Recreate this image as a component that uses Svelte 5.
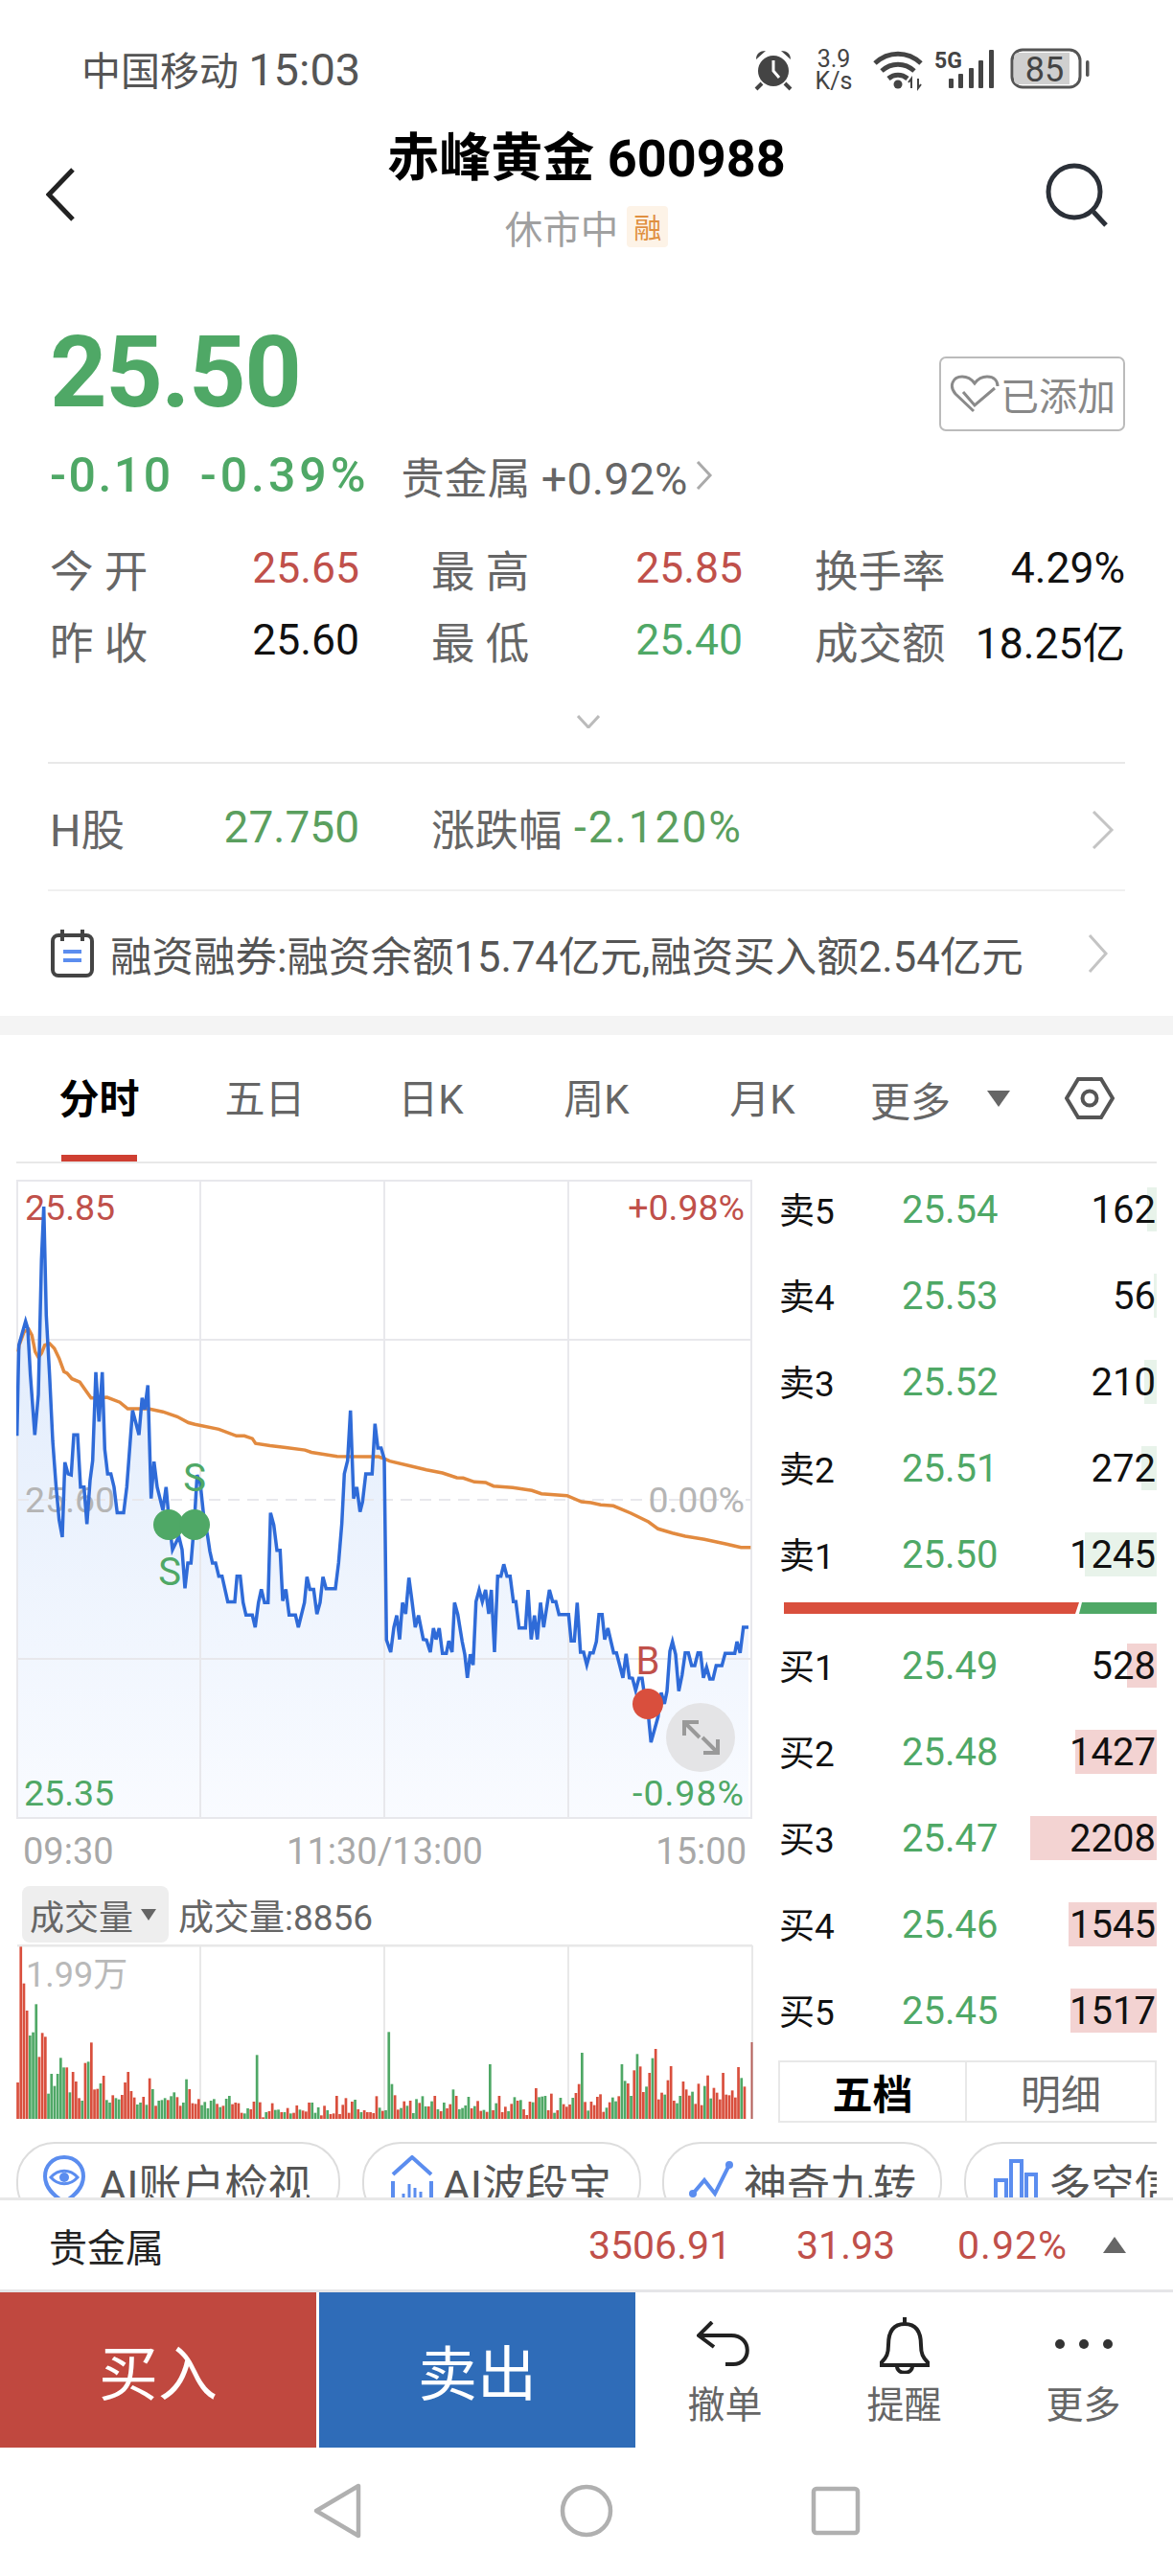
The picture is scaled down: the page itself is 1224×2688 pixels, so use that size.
<script lang="ts">
  /* Traced from the crops: [x, y] in crop pixels, converted to page pixels below. */
  const leftCrop = [[8,785],[12,600],[14,510],[35,438],[42,460],[50,600],[64,782],[75,660],[85,250],[92,90],[100,420],[110,600],[120,800],[130,930],[140,1040],[150,1092],[158,865],[168,900],[178,903],[186,782],[198,782],[207,940],[218,940],[227,1052],[237,920],[245,860],[255,592],[265,742],[275,592],[283,825],[292,900],[302,900],[312,940],[322,1018],[342,1018],[352,940],[370,708],[380,745],[390,782],[400,670],[408,705],[418,632],[428,975],[437,863],[447,940],[465,1010],[475,940],[485,1050],[495,1130],[515,1090],[525,1130],[534,1247],[543,1170],[553,1170],[563,1050],[572,903],[582,930],[592,1020],[605,1090],[612,1135],[620,1170],[630,1170],[640,1210],[650,1210],[668,1288],[690,1288],[697,1210],[707,1210],[716,1290],[725,1328],[745,1328],[754,1365],[764,1290],[773,1250],[783,1290],[794,1290],[802,1018],[812,1055],[822,1132],[832,1132],[840,1285],[850,1250],[860,1328],[880,1328],[889,1365],[908,1290],[916,1212],[925,1250],[937,1250],[947,1325],[957,1290],[966,1212],[976,1248],[1005,1248],[1015,1170],[1025,1050],[1033,900],[1043,860],[1052,708],[1062,975],[1072,940],[1082,1015],[1090,985],[1100,900],[1120,900],[1129,748],[1138,822],[1148,822],[1158,855]];
  const rightCrop = [[25,940],[38,978],[48,900],[57,863],[66,938],[75,823],[85,858],[95,745],[105,820],[115,900],[125,863],[140,938],[150,940],[162,978],[172,903],[180,938],[190,903],[200,982],[212,982],[220,943],[230,978],[238,823],[248,860],[262,945],[270,985],[278,1058],[287,985],[296,1018],[305,820],[315,783],[325,820],[335,783],[345,858],[353,783],[363,978],[373,740],[383,740],[392,703],[402,740],[412,740],[422,820],[430,820],[440,902],[460,902],[468,783],[478,938],[488,863],[497,938],[507,823],[517,900],[535,783],[545,820],[555,820],[565,860],[595,860],[603,943],[613,943],[622,823],[632,978],[642,978],[652,1018],[662,980],[672,980],[682,945],[690,860],[700,860],[708,938],[718,903],[736,980],[745,980],[765,1058],[775,983],[785,1058],[795,1060],[805,1098],[815,1060],[825,1060],[835,1130],[845,1180],[853,1260],[875,1180],[885,1105],[895,1140],[903,1100],[912,975],[920,945],[930,985],[940,1100],[950,1050],[960,980],[970,980],[980,1020],[990,1020],[1000,980],[1008,980],[1017,1058],[1027,1025],[1037,1062],[1047,1062],[1057,1020],[1075,1020],[1085,982],[1115,982],[1122,945],[1132,980],[1142,900],[1158,900]];
  const avgLeft = [[12,530],[15,510],[30,470],[45,462],[55,480],[65,530],[75,547],[85,535],[95,510],[110,505],[125,520],[140,550],[155,590],[165,595],[180,612],[205,622],[225,650],[240,670],[265,670],[290,668],[330,683],[355,703],[420,703],[465,712],[510,727],[545,745],[565,750],[640,765],[695,785],[720,785],[745,793],[755,808],[800,815],[850,820],[910,828],[930,835],[1010,847],[1100,848],[1140,848],[1160,855]];
  const avgRight = [[35,380],[100,395],[150,407],[200,417],[245,432],[265,433],[300,445],[335,447],[360,458],[420,463],[480,472],[510,482],[590,488],[635,507],[665,510],[695,517],[735,520],[790,543],[845,570],[875,592],[920,605],[960,615],[1020,625],[1090,640],[1135,650],[1165,650]];

  const fromLeft = ([x, y]) => [15 + x / 3, 1230 + y / 2.904];
  const fromRight = ([x, y]) => [395 + x / 3, 1400 + y / 3];
  const fmtPts = (pts) => pts.map(p => `${p[0].toFixed(1)},${p[1].toFixed(1)}`).join(' ');

  const pricePts = [...leftCrop.map(fromLeft), ...rightCrop.map(fromRight)];
  const priceLine = fmtPts(pricePts);
  const priceArea = fmtPts([[pricePts[0][0], 1899], ...pricePts, [pricePts[pricePts.length - 1][0], 1899]]);
  const avgLine = fmtPts([...avgLeft.map(fromLeft), ...avgRight.map(fromRight)]);

  /* Volume bars: colour + bar top in crop pixels, one per minute. */
  const volRaw = 'r465 r40 r155 r240 g318 g308 g220 r385 r310 r322 g500 g438 g476 g438 g388 g418 r418 g496 r432 r462 r514 g522 r404 g400 r340 r487 r485 g468 r444 g520 g528 r505 g514 g518 r504 r465 r432 r492 r512 g534 g528 r510 g535 r452 g486 r538 g522 g520 g514 r520 g508 g496 r511 r538 g528 g455 r486 r530 r532 r517 g536 g526 g546 g522 g517 r532 g542 r538 g516 g507 r533 r528 r530 r560 g562 g546 r549 r525 g379 r527 r574 g558 r555 r530 g551 g550 r558 g558 r545 g562 r560 r537 g550 r553 r556 r528 g528 g560 g543 r568 r538 g552 r564 r562 r507 r564 r535 r514 r560 r525 g519 r549 g558 r552 r558 r558 r561 r508 g544 r554 g552 g307 g470 r505 r550 g545 r524 g538 r522 g561 g517 r529 g508 g540 r540 g524 r507 g549 r555 g528 r546 r533 g487 r507 g549 g545 g537 g510 r546 g539 r523 r554 g551 r557 g408 r552 g530 r507 r558 r541 g555 r532 g511 r522 g520 r549 r567 r525 g527 r483 g511 g509 g507 r552 r500 g560 r552 g513 r533 r541 r534 g513 r498 r470 g372 r526 g553 r525 r536 r510 r502 r557 g544 r527 g512 g524 r508 g408 g460 r468 g507 r427 g376 r415 r495 g478 r435 g389 r360 r518 r497 g503 r458 r414 r522 g530 g507 r462 r487 r506 g494 r532 r469 r536 g476 r443 g515 r482 r497 r518 r435 r503 r505 r490 r512 r417 g451 r478';
  const volBars = volRaw.split(' ').map((v, i) => ({
    x: 17.2 + i * 3.2,
    y: 2020 + Number(v.slice(1)) / 3,
    color: v[0] === 'r' ? '#d94f3d' : '#4fa866'
  }));

  const asks = [
    { name: '卖5', price: '25.54', qty: 162, bar: 10 },
    { name: '卖4', price: '25.53', qty: 56, bar: 3 },
    { name: '卖3', price: '25.52', qty: 210, bar: 13 },
    { name: '卖2', price: '25.51', qty: 272, bar: 16 },
    { name: '卖1', price: '25.50', qty: 1245, bar: 75 }
  ];
  const bids = [
    { name: '买1', price: '25.49', qty: 528, bar: 31 },
    { name: '买2', price: '25.48', qty: 1427, bar: 85 },
    { name: '买3', price: '25.47', qty: 2208, bar: 132 },
    { name: '买4', price: '25.46', qty: 1545, bar: 92 },
    { name: '买5', price: '25.45', qty: 1517, bar: 90 }
  ];
  const tabs = ['分时', '五日', '日K', '周K', '月K'];
</script>

<div class="phone">
  <div class="status">
    <span class="carrier">中国移动 <span class="clock">15:03</span></span>
    <svg class="status-icons" width="350" height="55" viewBox="787 45 350 55">
      <!-- alarm -->
      <circle cx="807" cy="74" r="16" fill="#444" />
      <path d="M807 63v11l6 7" fill="none" stroke="#fff" stroke-width="3" />
      <path d="M789 62c0-6 4-9 10-9zM825 62c0-6-4-9-10-9z" fill="#444" />
      <path d="M795 87l-6 6M819 87l6 6" stroke="#444" stroke-width="4" />
      <!-- speed -->
      <text class="st-small" x="870" y="70" text-anchor="middle">3.9</text>
      <text class="st-small" x="870" y="93" text-anchor="middle">K/s</text>
      <!-- wifi -->
      <g fill="none" stroke="#444" stroke-width="5">
        <path d="M913 66c14-13 34-13 48 0" />
        <path d="M920 74c10-9 24-9 34 0" />
        <path d="M927 82c6-5 14-5 20 0" />
      </g>
      <circle cx="937" cy="88" r="4.5" fill="#444" />
      <path d="M951 92v-10l-3 4M958 82v10l3-4" fill="none" stroke="#444" stroke-width="2" />
      <!-- signal -->
      <text class="st-small st-5g" x="975" y="71">5G</text>
      <g fill="#444">
        <rect x="990" y="82" width="5" height="10" rx="1" />
        <rect x="1000" y="77" width="5" height="15" rx="1" />
        <rect x="1011" y="71" width="5" height="21" rx="1" />
        <rect x="1021" y="63" width="5" height="29" rx="1" />
        <rect x="1032" y="52" width="5" height="40" rx="1" />
      </g>
      <!-- battery -->
      <rect x="1056" y="52" width="71" height="39" rx="11" fill="#fff" stroke="#555" stroke-width="3" />
      <path d="M1062 55h54v33h-54a5 5 0 0 1-4-4v-25a5 5 0 0 1 4-4z" fill="#cfcfcf" />
      <rect x="1133" y="63" width="3.5" height="17" rx="1.7" fill="#555" />
      <text class="st-batt" x="1090" y="85" text-anchor="middle">85</text>
    </svg>
  </div>

  <header class="head">
    <svg class="back" width="30" height="56" viewBox="48 174 30 56">
      <polyline points="76,176 51,202 76,228" fill="none" stroke="#222" stroke-width="5" />
    </svg>
    <div class="head-mid">
      <div class="title">赤峰黄金 600988</div>
      <div class="sub">
        <span>休市中</span>
        <span class="rong">融</span>
      </div>
    </div>
    <svg class="search" width="66" height="68" viewBox="1090 167 66 68">
      <circle cx="1121" cy="198" r="27" fill="none" stroke="#2b3038" stroke-width="5" />
      <path d="M1141 219l13 14" stroke="#2b3038" stroke-width="5" fill="none" />
    </svg>
  </header>

  <section class="quote">
    <div class="price-row">
      <div class="price">25.50</div>
      <div class="added">
        <svg width="52" height="40" viewBox="0 0 52 40">
          <path d="M25 38L6 20C-1 12 3 2 13 2c6 0 10 3 13 7 3-4 7-7 13-7 7 0 11 4 11 10" fill="none" stroke="#8a8a8a" stroke-width="3" />
          <path d="M14 18l12 14 21-18" fill="none" stroke="#8a8a8a" stroke-width="3" />
        </svg>
        <span>已添加</span>
      </div>
    </div>

    <div class="change-row">
      <span class="chg">-0.10</span>
      <span class="chg pct">-0.39%</span>
      <span class="sector">贵金属 <span class="sector-pct">+0.92%</span></span>
      <svg class="sector-arrow" width="18" height="30" viewBox="0 0 18 30">
        <polyline points="2,1 15,15 2,29" fill="none" stroke="#aaa" stroke-width="3" />
      </svg>
    </div>

    <div class="stats">
      <div class="cell"><span class="lbl">今 开</span><span class="red">25.65</span></div>
      <div class="cell"><span class="lbl">最 高</span><span class="red">25.85</span></div>
      <div class="cell"><span class="lbl">换手率</span><span class="blk">4.29%</span></div>
      <div class="cell"><span class="lbl">昨 收</span><span class="blk">25.60</span></div>
      <div class="cell"><span class="lbl">最 低</span><span class="grn">25.40</span></div>
      <div class="cell"><span class="lbl">成交额</span><span class="blk">18.25亿</span></div>
    </div>

    <div class="expand">
      <svg width="24" height="14" viewBox="0 0 24 14">
        <polyline points="1,1 12,13 23,1" fill="none" stroke="#bbb" stroke-width="3" />
      </svg>
    </div>
  </section>

  <div class="hk-row">
    <div class="cell"><span class="lbl">H股</span><span class="grn">27.750</span></div>
    <div class="cell hk-chg"><span class="lbl">涨跌幅</span><span class="grn">-2.120%</span></div>
    <div class="hk-arrow">
      <svg width="24" height="40" viewBox="0 0 24 40">
        <polyline points="2,1 21,20 2,39" fill="none" stroke="#c4c4c4" stroke-width="3" />
      </svg>
    </div>
  </div>

  <div class="margin-row">
    <svg width="46" height="52" viewBox="53 971 46 52">
      <rect x="55" y="978" width="41" height="42" rx="6" fill="none" stroke="#444" stroke-width="4" />
      <path d="M65 972v12M86 972v12" stroke="#444" stroke-width="4" />
      <path d="M66 995h19" stroke="#5b8def" stroke-width="4" />
      <path d="M66 1004h19" stroke="#5b8def" stroke-width="4" />
    </svg>
    <span class="margin-text">融资融券:融资余额15.74亿元,融资买入额2.54亿元</span>
    <svg class="margin-arrow" width="22" height="40" viewBox="0 0 22 40">
      <polyline points="2,1 19,20 2,39" fill="none" stroke="#c4c4c4" stroke-width="3" />
    </svg>
  </div>

  <div class="band"></div>

  <nav class="tabs">
    {#each tabs as tab, i}
      <div class="tab" class:active={i === 0}>{tab}</div>
    {/each}
    <span class="more">更多</span>
    <span class="more-caret"></span>
    <svg class="hex" width="52" height="46" viewBox="1111 1125 52 46">
      <polygon points="1113,1148 1125,1128 1149,1128 1161,1148 1149,1168 1125,1168" fill="none" stroke="#555" stroke-width="4" />
      <circle cx="1137" cy="1148" r="7.5" fill="none" stroke="#555" stroke-width="4" />
    </svg>
  </nav>

  <section class="market">
    <div class="chart-col">
      <svg class="price-chart" width="770" height="668" viewBox="17 1233 770 668">
        <defs>
          <linearGradient id="areaFill" gradientUnits="userSpaceOnUse" x1="0" y1="1400" x2="0" y2="1899">
            <stop offset="0" stop-color="#e3edfc" />
            <stop offset="1" stop-color="#f9fbff" />
          </linearGradient>
        </defs>
        <polygon points={priceArea} fill="url(#areaFill)" />
        <g stroke="#e8e8ec" stroke-width="2" fill="none">
          <rect x="18" y="1234" width="766" height="665" />
          <path d="M209 1234V1899M401 1234V1899M593 1234V1899" />
          <path d="M18 1400H784M18 1733H784" />
          <path d="M18 1567H784" stroke-dasharray="12 8" />
        </g>
        <text class="ch red-t" x="26" y="1275">25.85</text>
        <text class="ch red-t" x="777" y="1275" text-anchor="end">+0.98%</text>
        <text class="ch gray-t" x="26" y="1580">25.60</text>
        <text class="ch gray-t" x="777" y="1580" text-anchor="end">0.00%</text>
        <text class="ch grn-t" x="25" y="1886">25.35</text>
        <text class="ch grn-t low-pct" x="777" y="1886" text-anchor="end">-0.98%</text>

        <polyline points={avgLine} fill="none" stroke="#e28a3f" stroke-width="3.5" />
        <polyline points={priceLine} fill="none" stroke="#2f6bd8" stroke-width="3.5" />

        <circle cx="176" cy="1593" r="16" fill="#4fa866" />
        <circle cx="203" cy="1593" r="16" fill="#4fa866" />
        <text class="mark grn-t" x="203" y="1558" text-anchor="middle">S</text>
        <text class="mark grn-t" x="177" y="1656" text-anchor="middle">S</text>
        <circle cx="676" cy="1780" r="16" fill="#d94f3d" />
        <text class="mark red-t" x="676" y="1749" text-anchor="middle">B</text>

        <circle cx="731" cy="1815" r="36" fill="#e4e4e6" />
        <g fill="none" stroke="#999" stroke-width="4">
          <path d="M714 1813v-14h15M715 1800l15 15" />
          <path d="M749 1817v14h-15M748 1830l-15-15" />
        </g>
      </svg>

      <div class="times">
        <span>09:30</span>
        <span>11:30/13:00</span>
        <span>15:00</span>
      </div>

      <div class="vol-head">
        <div class="vol-select">成交量<span class="vol-caret"></span></div>
        <span class="vol-val">成交量:8856</span>
      </div>

      <svg class="vol-chart" width="770" height="184" viewBox="17 2031 770 184">
        <g stroke="#e8e8e8" stroke-width="2" fill="none">
          <path d="M18 2032H785" stroke-width="3" />
          <path d="M209 2032V2213M401 2032V2213M593 2032V2213M785 2032V2213" />
        </g>
        {#each volBars as bar}
          <rect x={bar.x} y={bar.y} width="2.7" height={2213 - bar.y} fill={bar.color} />
        {/each}
        <rect x="783.5" y="2133" width="2" height="80" fill="#b5605a" />
        <text class="ch vol-max" x="27" y="2075">1.99万</text>
      </svg>
    </div>

    <div class="book">
      {#each asks as row}
        <div class="book-row">
          <span class="qty-bar ask" style="width: {row.bar}px"></span>
          <span class="b-name">{row.name}</span>
          <span class="b-price">{row.price}</span>
          <span class="b-qty">{row.qty}</span>
        </div>
      {/each}
      <svg class="ratio" width="389" height="12" viewBox="0 0 389 12">
        <polygon points="0,0 308,0 304,12 0,12" fill="#d94f3d" />
        <polygon points="311,0 389,0 389,12 308,12" fill="#4fa866" />
      </svg>
      {#each bids as row}
        <div class="book-row">
          <span class="qty-bar bid" style="width: {row.bar}px"></span>
          <span class="b-name">{row.name}</span>
          <span class="b-price">{row.price}</span>
          <span class="b-qty">{row.qty}</span>
        </div>
      {/each}
      <div class="switch">
        <div class="sw on">五档</div>
        <div class="sw">明细</div>
      </div>
    </div>
  </section>

  <div class="pills">
    <div class="pill p1">
      <svg width="44" height="56" viewBox="0 0 44 56">
        <path d="M22 2C10 2 2 11 2 22c0 12 9 20 20 27 11-7 20-15 20-27C42 11 34 2 22 2z" fill="none" stroke="#5b8def" stroke-width="4" />
        <path d="M8 23c8-9 20-9 28 0-8 9-20 9-28 0z" fill="none" stroke="#5b8def" stroke-width="3" />
        <circle cx="22" cy="23" r="5" fill="#5b8def" />
      </svg>
      <span>AI账户检视</span>
    </div>
    <div class="pill p2">
      <svg width="48" height="56" viewBox="0 0 48 56">
        <path d="M4 20L24 2l20 18" fill="none" stroke="#5b8def" stroke-width="4" />
        <path d="M4 27v20c0 3 3 5 6 5M44 27v20c0 3-3 5-6 5" fill="none" stroke="#5b8def" stroke-width="4" />
        <path d="M15 40v8M21 30v18M27 34v14M33 38v10" stroke="#5b8def" stroke-width="3" />
      </svg>
      <span>AI波段宝</span>
    </div>
    <div class="pill p3">
      <svg width="46" height="48" viewBox="0 0 46 48">
        <polyline points="4,36 16,22 27,36 42,6" fill="none" stroke="#5b8def" stroke-width="4" />
        <circle cx="4" cy="36" r="4" fill="#5b8def" />
        <circle cx="42" cy="6" r="4" fill="#5b8def" />
      </svg>
      <span>神奇九转</span>
    </div>
    <div class="pill p4">
      <svg width="46" height="56" viewBox="0 0 46 56">
        <g fill="none" stroke="#5b8def" stroke-width="4">
          <rect x="2" y="26" width="11" height="28" />
          <rect x="18" y="6" width="11" height="48" />
          <rect x="34" y="20" width="10" height="34" />
        </g>
      </svg>
      <span>多空信号</span>
    </div>
  </div>

  <div class="sector-row">
    <span class="sector-name">贵金属</span>
    <span class="sector-v v1">3506.91</span>
    <span class="sector-v v2">31.93</span>
    <span class="sector-v v3">0.92%</span>
    <span class="sector-up"></span>
  </div>

  <div class="actions">
    <button class="trade buy">买入</button>
    <button class="trade sell">卖出</button>
    <div class="tool">
      <div class="tool-icon">
        <svg width="60" height="48" viewBox="727 2424 60 48">
          <path d="M743 2425l-14 14 16 12" fill="none" stroke="#222" stroke-width="4" />
          <path d="M730 2439h33c22 0 22 30 2 30h-8" fill="none" stroke="#222" stroke-width="4" />
        </svg>
      </div>
      <span>撤单</span>
    </div>
    <div class="tool">
      <div class="tool-icon">
        <svg width="60" height="62" viewBox="914 2417 60 62">
          <path d="M944 2427c-13 0-17 10-17 22 0 9-2 13-7 18v3h48v-3c-5-5-7-9-7-18 0-12-4-22-17-22z" fill="none" stroke="#222" stroke-width="4" />
          <path d="M944 2420v7M936 2471c0 9 16 9 16 0" fill="none" stroke="#222" stroke-width="4" />
        </svg>
      </div>
      <span>提醒</span>
    </div>
    <div class="tool">
      <div class="tool-icon">
        <svg width="64" height="48" viewBox="1098 2423 64 48">
          <circle cx="1105" cy="2447" r="5" fill="#333" />
          <circle cx="1130" cy="2447" r="5" fill="#333" />
          <circle cx="1155" cy="2447" r="5" fill="#333" />
        </svg>
      </div>
      <span>更多</span>
    </div>
  </div>

  <div class="navbar">
    <svg width="60" height="60" viewBox="0 0 60 60">
      <polygon points="8,30 52,4 52,56" fill="none" stroke="#b0b0b0" stroke-width="4.5" stroke-linejoin="round" />
    </svg>
    <svg width="60" height="60" viewBox="0 0 60 60">
      <circle cx="30" cy="30" r="25" fill="none" stroke="#b0b0b0" stroke-width="4.5" />
    </svg>
    <svg width="60" height="60" viewBox="0 0 60 60">
      <rect x="7" y="7" width="46" height="46" rx="3" fill="none" stroke="#b0b0b0" stroke-width="4.5" />
    </svg>
  </div>
</div>

<style>
  :global(body) {
    margin: 0;
    background: #fff;
  }

  .phone {
    width: 1224px;
    height: 2688px;
    overflow: hidden;
    background: #fff;
    font-family: Roboto, "Noto Sans CJK SC", sans-serif;
    display: flex;
    flex-direction: column;
  }

  /* ── status bar ── */
  .status {
    height: 130px;
    box-sizing: border-box;
    padding: 46px 87px 0 85px;
    display: flex;
    justify-content: space-between;
    align-items: flex-start;
    flex-shrink: 0;
  }
  .carrier { font-size: 41px; line-height: 54px; color: #555; }
  .clock { font-size: 47px; }
  .status-icons { margin-top: -1px; }
  .st-small { font-size: 25px; fill: #444; }
  .st-5g { font-size: 23px; font-weight: 700; }
  .st-batt { font-size: 36px; fill: #444; }

  /* ── header ── */
  .head {
    height: 145px;
    display: grid;
    grid-template-columns: 1fr auto 1fr;
    align-items: center;
    flex-shrink: 0;
  }
  .back { margin-left: 48px; }
  .search { justify-self: end; margin-right: 68px; }
  .head-mid { align-self: start; display: flex; flex-direction: column; align-items: center; }
  .title { margin-top: 2px; font-size: 54px; line-height: 68px; font-weight: 700; color: #000; white-space: nowrap; }
  .sub { margin-top: 6px; height: 60px; display: flex; align-items: center; gap: 9px; font-size: 39.5px; color: #a0a0a0; }
  .rong {
    width: 43px;
    height: 43px;
    border-radius: 4px;
    background: #fdf3e7;
    color: #e09040;
    font-size: 29px;
    display: flex;
    align-items: center;
    justify-content: center;
  }

  /* ── quote ── */
  .quote { padding: 0 50px 0 52px; flex-shrink: 0; }
  .price-row { height: 175px; display: flex; justify-content: space-between; }
  .price {
    font-size: 104px;
    line-height: 106px;
    font-weight: 700;
    color: #4fa866;
    margin-top: 61px;
    letter-spacing: -1.5px;
  }
  .added {
    align-self: flex-end;
    width: 194px;
    height: 78px;
    box-sizing: border-box;
    border: 2px solid #bbb;
    border-radius: 7px;
    display: flex;
    align-items: center;
    padding-left: 9px;
    gap: 1px;
    font-size: 40px;
    color: #888;
  }
  .change-row { height: 92px; margin-bottom: 2px; display: flex; align-items: center; }
  .chg { font-size: 50px; font-weight: 500; color: #4fa866; letter-spacing: 2.5px; }
  .pct { margin-left: 28px; letter-spacing: 4px; }
  .sector { margin-left: 33px; font-size: 45px; color: #666; }
  .sector-pct { font-size: 47px; }
  .sector-arrow { margin-left: 8px; }

  .stats {
    margin-top: 13px;
    display: grid;
    grid-template-columns: 323px 325px 324px;
    column-gap: 75px;
    grid-auto-rows: 75px;
    align-items: center;
    font-size: 44.5px;
  }
  .cell { display: flex; justify-content: space-between; align-items: center; }
  .lbl { color: #666; font-size: 45.5px; }
  .red { color: #c0504a; }
  .grn { color: #4fa866; }
  .blk { color: #111; }
  .expand { height: 90px; box-sizing: border-box; padding-top: 6px; display: flex; align-items: center; justify-content: center; margin-right: -2px; }

  /* ── H share / margin rows ── */
  .hk-row {
    margin: 0 50px;
    padding-left: 2px;
    height: 135px;
    box-sizing: border-box;
    border-top: 2px solid #e8e8e8;
    border-bottom: 2px solid #f0f0f0;
    display: grid;
    grid-template-columns: 323px 325px 1fr;
    column-gap: 75px;
    align-items: center;
    font-size: 46px;
    flex-shrink: 0;
  }
  .hk-chg .grn { letter-spacing: 2px; }
  .hk-row .grn { color: #5a9f5e; }
  .hk-arrow { justify-self: end; margin-right: 11px; height: 40px; }
  .margin-row {
    height: 130px;
    padding: 0 67px 0 53px;
    display: flex;
    align-items: center;
    gap: 16px;
    flex-shrink: 0;
  }
  .margin-text { font-size: 43.5px; color: #555; white-space: nowrap; }
  .margin-arrow { margin-left: auto; }
  .band { height: 20px; background: #f4f4f4; flex-shrink: 0; }

  /* ── tabs ── */
  .tabs {
    height: 134px;
    box-sizing: border-box;
    margin: 0 17px;
    border-bottom: 2px solid #e8e8e8;
    display: flex;
    align-items: center;
    font-size: 42px;
    color: #666;
    flex-shrink: 0;
  }
  .tab {
    width: 173px;
    height: 100%;
    line-height: 136px;
    text-align: center;
    position: relative;
  }
  .tab.active { color: #000; font-weight: 700; }
  .tab.active::after {
    content: '';
    position: absolute;
    left: 47px;
    bottom: 0;
    width: 79px;
    height: 7px;
    background: #cf3f32;
  }
  .more { margin-left: 26px; }
  .more-caret {
    margin-left: 38px;
    width: 0;
    height: 0;
    border-left: 12.5px solid transparent;
    border-right: 12.5px solid transparent;
    border-top: 17px solid #666;
  }
  .hex { margin-left: auto; margin-right: 44px; }

  /* ── chart + order book ── */
  .market {
    height: 1001px;
    padding-left: 17px;
    display: grid;
    grid-template-columns: 770px 395px;
    column-gap: 25px;
    flex-shrink: 0;
  }
  .chart-col { padding-top: 17px; display: flex; flex-direction: column; }
  .price-chart, .vol-chart { display: block; flex-shrink: 0; }
  .ch { font-size: 37.5px; }
  .low-pct { letter-spacing: 1px; }
  .mark { font-size: 40px; }
  .red-t { fill: #c0504a; }
  .grn-t { fill: #4fa866; }
  .gray-t { fill: #b5b5b5; }
  .vol-max { fill: #b9b9b9; font-size: 36px; }

  .times {
    height: 66px;
    padding: 0 8px 0 7px;
    display: flex;
    justify-content: space-between;
    align-items: center;
    font-size: 38px;
    color: #a8a8a8;
    box-sizing: border-box;
    flex-shrink: 0;
  }
  .vol-head {
    margin: 3px 0 2px 6px;
    height: 59px;
    display: flex;
    align-items: center;
    gap: 10px;
    font-size: 36px;
    color: #666;
    flex-shrink: 0;
  }
  .vol-val { font-size: 37px; }
  .vol-select {
    width: 153px;
    height: 59px;
    box-sizing: border-box;
    padding-left: 8px;
    background: #eee;
    border-radius: 8px;
    display: flex;
    align-items: center;
    gap: 8px;
  }
  .vol-caret {
    width: 0;
    height: 0;
    border-left: 8px solid transparent;
    border-right: 8px solid transparent;
    border-top: 12px solid #666;
  }

  .book { padding-top: 3px; display: flex; flex-direction: column; }
  .book-row {
    height: 90px;
    flex-shrink: 0;
    position: relative;
    display: flex;
    align-items: center;
    font-size: 40px;
    color: #111;
  }
  .b-name { width: 129px; padding-left: 1px; font-size: 37px; box-sizing: border-box; position: relative; top: -1px; }
  .b-price { color: #4fa866; position: relative; }
  .b-qty { margin-left: auto; margin-right: 1px; position: relative; }
  .qty-bar { position: absolute; right: 0; top: 22px; height: 46px; }
  .qty-bar.ask { background: #e8f3ea; }
  .qty-bar.bid { background: #f3d3d2; }
  .ratio { margin: 5px 0 9px 6px; flex-shrink: 0; display: block; }
  .switch {
    margin-top: 7px;
    height: 65px;
    box-sizing: border-box;
    border: 2px solid #e8e8e8;
    display: grid;
    grid-template-columns: 195px 1fr;
    flex-shrink: 0;
  }
  .sw {
    display: flex;
    align-items: center;
    justify-content: center;
    font-size: 42px;
    color: #666;
  }
  .sw.on { color: #000; font-weight: 700; border-right: 2px solid #e8e8e8; }

  /* ── tool pills ── */
  .pills {
    height: 78px;
    width: 1207px;
    box-sizing: border-box;
    padding: 20px 0 0 17px;
    overflow: hidden;
    display: flex;
    gap: 22.5px;
    flex-shrink: 0;
  }
  .pill {
    height: 84px;
    box-sizing: border-box;
    border: 2px solid #ddd;
    border-radius: 40px;
    padding-left: 26px;
    display: flex;
    align-items: center;
    font-size: 45px;
    color: #555;
    white-space: nowrap;
    flex-shrink: 0;
  }
  .pill svg { flex-shrink: 0; }
  .p1 { width: 338px; gap: 14px; }
  .p2 { width: 291px; gap: 8px; }
  .p3 { width: 292px; gap: 11px; }
  .p4 { width: 300px; padding-left: 29px; gap: 11px; }

  /* ── sector row ── */
  .sector-row {
    height: 99px;
    box-sizing: border-box;
    border-top: 3px solid #e8e8e8;
    border-bottom: 3px solid #e5e5e8;
    padding: 0 49px 0 51px;
    display: flex;
    align-items: center;
    font-size: 41px;
    flex-shrink: 0;
  }
  .sector-name { color: #222; font-size: 40px; }
  .sector-v { color: #c0504a; }
  .v1 { margin-left: auto; }
  .v2 { margin-left: 68px; }
  .v3 { margin-left: 65px; letter-spacing: 1px; }
  .sector-up {
    margin-left: 37px;
    width: 0;
    height: 0;
    border-left: 12.5px solid transparent;
    border-right: 12.5px solid transparent;
    border-bottom: 17px solid #666;
  }

  /* ── trade actions ── */
  .actions { height: 162px; display: flex; flex-shrink: 0; }
  .trade {
    width: 330px;
    border: none;
    padding: 0;
    color: #fff;
    font-family: inherit;
    font-size: 62px;
  }
  .buy { background: #c0483f; margin-right: 3px; }
  .sell { background: #2f6cb8; }
  .tool {
    width: 187px;
    padding-top: 23px;
    box-sizing: border-box;
    display: flex;
    flex-direction: column;
    align-items: center;
    font-size: 39px;
    line-height: 50px;
    color: #666;
  }
  .tool-icon { height: 62px; display: flex; align-items: center; margin-bottom: 8px; }

  .navbar {
    height: 132px;
    display: flex;
    align-items: center;
    justify-content: center;
    gap: 200px;
    flex-shrink: 0;
  }
</style>
